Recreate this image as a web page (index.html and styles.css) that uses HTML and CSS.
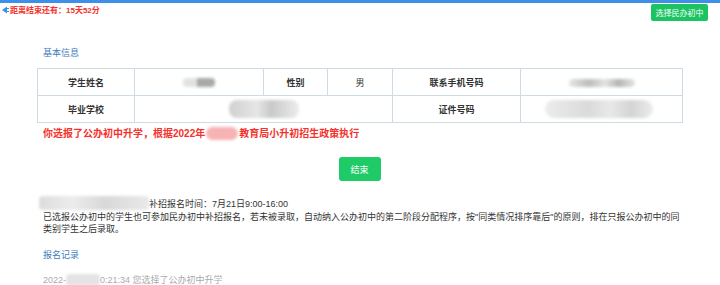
FILE: index.html
```html
<!DOCTYPE html>
<html lang="zh">
<head>
<meta charset="utf-8">
<link rel="stylesheet" href="styles.css">
</head>
<body>
<div class="topbar"></div>
<header class="head">
  <div class="countdown">
    <svg class="cd-icon" width="7" height="8" viewBox="0 0 7 8"><path d="M0 4 L5 0.5 L5 2 L7 2 L7 3 L5 3 L5 5 L7 5 L7 6 L5 6 L5 7.5 Z" fill="#3d8fe8"/></svg>
    <span>距离结束还有：15天52分</span>
  </div>
  <button class="btn btn-top">选择民办初中</button>
</header>
<main class="main">
  <h3 class="sec-title">基本信息</h3>
  <table class="info">
    <tr>
      <th class="c1">学生姓名</th>
      <td class="c2"><span class="blur b-name"></span></td>
      <th class="c3">性别</th>
      <td class="c4">男</td>
      <th class="c5">联系手机号码</th>
      <td class="c6"><span class="blur b-phone"></span></td>
    </tr>
    <tr>
      <th>毕业学校</th>
      <td colspan="3"><span class="blur b-school"></span></td>
      <th>证件号码</th>
      <td><span class="blur b-id"></span></td>
    </tr>
  </table>
  <p class="notice">你选报了公办初中升学，根据2022年<span class="blur b-red"></span>教育局小升初招生政策执行</p>
  <div class="actions"><button class="btn btn-end">结束</button></div>
  <div class="desc">
    <p><span class="blur b-desc"></span>补招报名时间：7月21日9:00-16:00</p>
    <p>已选报公办初中的学生也可参加民办初中补招报名，若未被录取，自动纳入公办初中的第二阶段分配程序，按"同类情况排序靠后"的原则，排在只报公办初中的同类别学生之后录取。</p>
  </div>
  <h3 class="sec-title rec-title">报名记录</h3>
  <p class="log">2022-<span class="blur b-log"></span>0:21:34 您选择了公办初中升学</p>
</main>
</body>
</html>
```
FILE: styles.css
```css
* { box-sizing: border-box; }
html, body { margin: 0; padding: 0; background: #fff; }
body {
  font-family: "Liberation Sans", "Noto Sans CJK SC", sans-serif;
  font-size: 9px;
  color: #333;
  width: 720px;
  height: 285px;
  overflow: hidden;
}
.topbar { height: 3px; background: #3d8fe8; }
.head {
  display: flex;
  justify-content: space-between;
  align-items: flex-start;
  padding: 1px 12px 0 2px;
  height: 19px;
}
.countdown {
  display: flex;
  align-items: center;
  gap: 1px;
  color: #f5312b;
  font-weight: bold;
  font-size: 8px;
  margin-top: 0;
}
.btn {
  border: none;
  color: #fff;
  font-family: inherit;
  border-radius: 2px;
  padding: 0;
  cursor: pointer;
}
.btn-top {
  background: #1bc462;
  width: 57px;
  height: 17px;
  font-size: 8px;
}
.main { padding: 0 39px 0 37px; }
.sec-title {
  margin: 0;
  font-size: 9px;
  font-weight: normal;
  color: #3f7cc0;
  padding-left: 6px;
  margin-top: 25px;
  line-height: 12px;
}
.info {
  margin-top: 9px;
  width: 645px;
  border-collapse: collapse;
  table-layout: fixed;
}
.info th, .info td {
  border: 1px solid #cddbe3;
  height: 27px;
  padding: 0;
  text-align: center;
  font-size: 9px;
  color: #333;
}
.info th { font-weight: bold; }
.c1 { width: 97px; }
.c2 { width: 129px; }
.c3 { width: 64px; }
.c4 { width: 65px; }
.c5 { width: 128px; }
.c6 { width: 162px; }
.blur {
  display: inline-block;
  vertical-align: middle;
  background: #d4d4d4;
  filter: blur(1.5px);
  border-radius: 4px;
}
.b-name { width: 32px; height: 9px; background: linear-gradient(90deg, #e2e2e2 0 45%, #a9a9a9 45% 100%); }
.b-phone { width: 66px; height: 8px; background: linear-gradient(90deg, #e6e6e6, #bdbdbd 30%, #e3e3e3 55%, #b5b5b5 75%, #e5e5e5); }
.b-school { width: 70px; height: 18px; background: linear-gradient(90deg, #d0d0d0, #e6e6e6 40%, #c9c9c9 60%, #ececec); border-radius: 8px; }
.b-id { width: 108px; height: 18px; margin-left: -6px; background: linear-gradient(90deg, #ececec, #dadada 40%, #e8e8e8 60%, #d4d4d4 80%, #ececec); border-radius: 9px; }
.notice {
  margin: 4px 0 0 6px;
  color: #f5312b;
  font-weight: bold;
  font-size: 10px;
  line-height: 14px;
}
.b-red { width: 32px; height: 13px; background: #f7b2b2; border-radius: 7px; margin: 0 1px; vertical-align: -3px; }
.actions { display: flex; justify-content: center; margin-top: 16px; padding-left: 1px; }
.btn-end {
  background: #1ecb67;
  width: 42px;
  height: 24px;
  font-size: 9px;
  border-radius: 3px;
}
.desc { margin: 15px 0 0 6px; }
.desc p { margin: 0; line-height: 12.5px; font-size: 9px; color: #333; }
.b-desc { width: 110px; height: 14px; background: linear-gradient(90deg, #dcdcdc, #ececec 30%, #d8d8d8 60%, #e9e9e9); vertical-align: -3px; margin-left: -4px; }
.rec-title { margin-top: 13px; }
.log { margin: 13px 0 0 6px; color: #aaa; font-size: 9px; line-height: 12px; }
.b-log { width: 34px; height: 12px; background: #e4e4e4; vertical-align: -3px; }
```
